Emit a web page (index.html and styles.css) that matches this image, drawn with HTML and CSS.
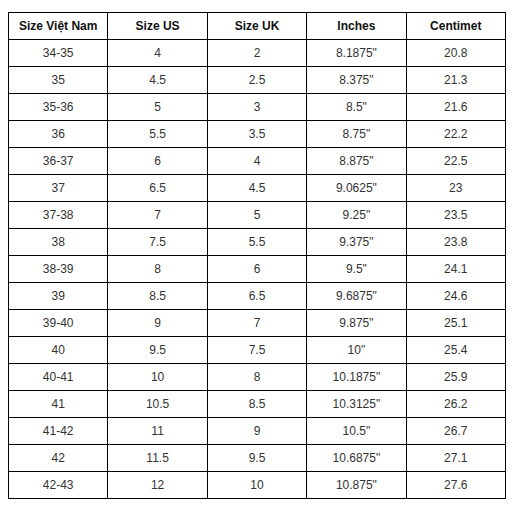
FILE: index.html
```html
<!DOCTYPE html>
<html>
<head>
<meta charset="utf-8">
<link rel="stylesheet" href="styles.css">
</head>
<body>
<table class="size-table">
<thead>
<tr><th>Size Việt Nam</th><th>Size US</th><th>Size UK</th><th>Inches</th><th>Centimet</th></tr>
</thead>
<tbody>
<tr><td>34-35</td><td>4</td><td>2</td><td>8.1875"</td><td>20.8</td></tr>
<tr><td>35</td><td>4.5</td><td>2.5</td><td>8.375"</td><td>21.3</td></tr>
<tr><td>35-36</td><td>5</td><td>3</td><td>8.5"</td><td>21.6</td></tr>
<tr><td>36</td><td>5.5</td><td>3.5</td><td>8.75"</td><td>22.2</td></tr>
<tr><td>36-37</td><td>6</td><td>4</td><td>8.875"</td><td>22.5</td></tr>
<tr><td>37</td><td>6.5</td><td>4.5</td><td>9.0625"</td><td>23</td></tr>
<tr><td>37-38</td><td>7</td><td>5</td><td>9.25"</td><td>23.5</td></tr>
<tr><td>38</td><td>7.5</td><td>5.5</td><td>9.375"</td><td>23.8</td></tr>
<tr><td>38-39</td><td>8</td><td>6</td><td>9.5"</td><td>24.1</td></tr>
<tr><td>39</td><td>8.5</td><td>6.5</td><td>9.6875"</td><td>24.6</td></tr>
<tr><td>39-40</td><td>9</td><td>7</td><td>9.875"</td><td>25.1</td></tr>
<tr><td>40</td><td>9.5</td><td>7.5</td><td>10"</td><td>25.4</td></tr>
<tr><td>40-41</td><td>10</td><td>8</td><td>10.1875"</td><td>25.9</td></tr>
<tr><td>41</td><td>10.5</td><td>8.5</td><td>10.3125"</td><td>26.2</td></tr>
<tr><td>41-42</td><td>11</td><td>9</td><td>10.5"</td><td>26.7</td></tr>
<tr><td>42</td><td>11.5</td><td>9.5</td><td>10.6875"</td><td>27.1</td></tr>
<tr><td>42-43</td><td>12</td><td>10</td><td>10.875"</td><td>27.6</td></tr>
</tbody>
</table>
</body>
</html>
```
FILE: styles.css
```css
html, body {
  margin: 0;
  background: #ffffff;
}
body {
  padding: 12px 0 0 8px;
  font-family: "Liberation Sans", Arial, sans-serif;
}
.size-table {
  border-collapse: collapse;
  table-layout: fixed;
  width: 498px;
}
.size-table th,
.size-table td {
  border: 1px solid #000;
  height: 26px;
  padding: 0;
  text-align: center;
  vertical-align: middle;
  font-size: 12px;
  color: #333;
}
.size-table th {
  font-weight: bold;
  color: #111;
}
```
